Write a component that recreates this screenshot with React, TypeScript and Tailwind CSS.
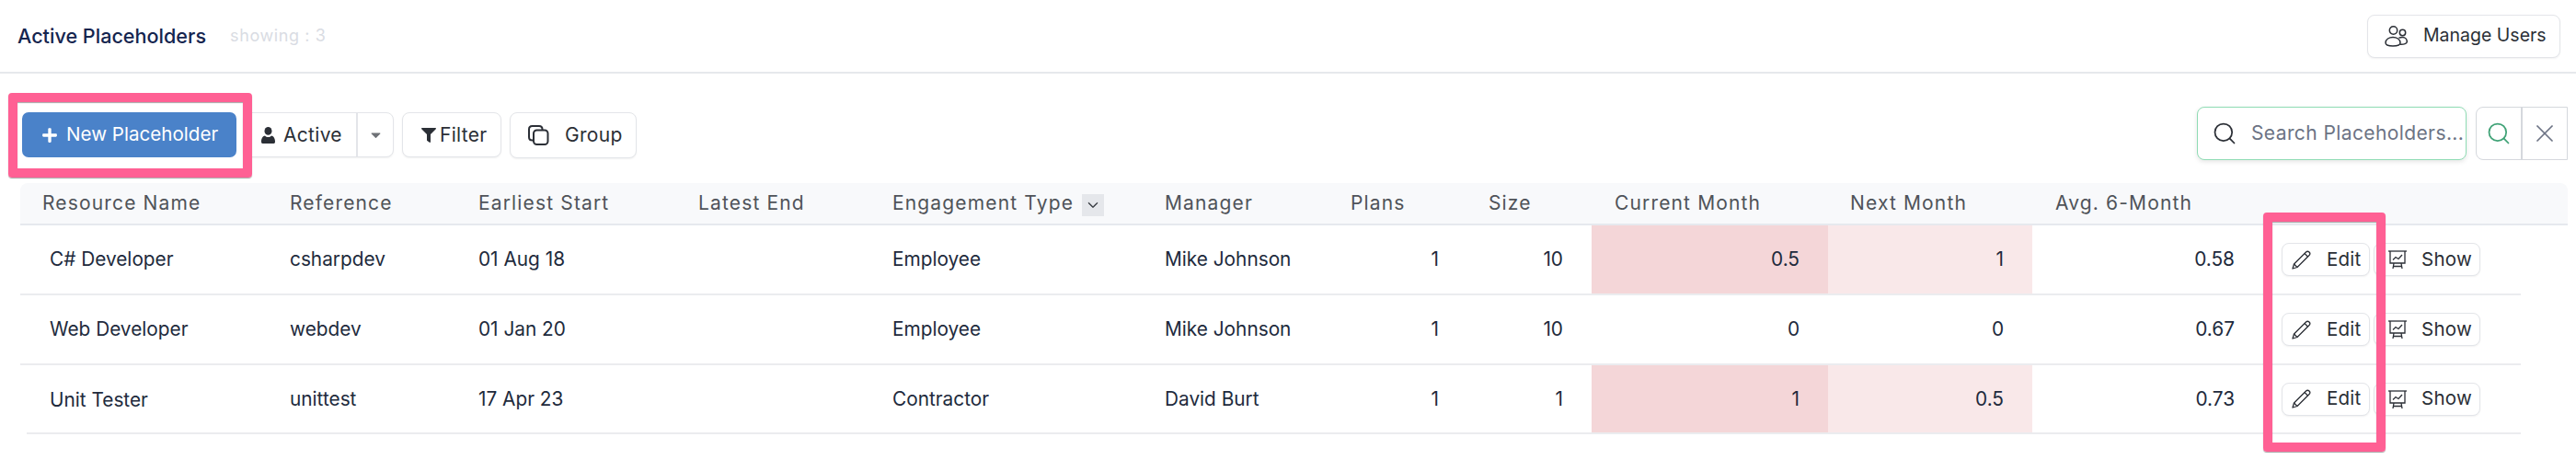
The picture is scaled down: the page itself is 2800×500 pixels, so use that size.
import React from "react";
import { FaPlus, FaFilter, FaCaretDown } from "react-icons/fa";
import { BsChevronDown } from "react-icons/bs";
import { Search, X } from "lucide-react";

type Row = { name: string; ref: string; start: string; type: string; mgr: string; plans: string; size: string; cur: string; next: string; avg: string; curBg: string; nextBg: string };

const rows: Row[] = [
  { name: "C# Developer", ref: "csharpdev", start: "01 Aug 18", type: "Employee", mgr: "Mike Johnson", plans: "1", size: "10", cur: "0.5", next: "1", avg: "0.58", curBg: "bg-[#f4d6d8]", nextBg: "bg-[#f9e8e9]" },
  { name: "Web Developer", ref: "webdev", start: "01 Jan 20", type: "Employee", mgr: "Mike Johnson", plans: "1", size: "10", cur: "0", next: "0", avg: "0.67", curBg: "", nextBg: "" },
  { name: "Unit Tester", ref: "unittest", start: "17 Apr 23", type: "Contractor", mgr: "David Burt", plans: "1", size: "1", cur: "1", next: "0.5", avg: "0.73", curBg: "bg-[#f4d6d8]", nextBg: "bg-[#f9e8e9]" },
];

const th = "h-[46px] pl-[32px] text-left font-normal text-[21px] tracking-[1.15px] text-[#4f5359] whitespace-nowrap border-b-2 border-[#e6e9ee]";
const td = "pl-[32px] text-[20.8px] text-[#212a3c] border-b-2 border-[#ebecef] whitespace-nowrap";
const tdr = "pr-[31px] text-right text-[20.8px] text-[#212a3c] border-b-2 border-[#ebecef] whitespace-nowrap";
const btn = "flex items-center bg-white border border-[#e3e5e9] rounded-[8px] text-[#2b2f36] shadow-[0_1px_2px_rgba(0,0,0,0.06)]";

function PeopleIcon() {
  return (
    <svg width="25" height="23" viewBox="0 0 25 23" fill="none" stroke="currentColor" strokeWidth="1.5">
      <circle cx="9.5" cy="5" r="4.2" />
      <circle cx="19.5" cy="7.5" r="3.2" />
      <path d="M1 18.5C1 14.5 5 12.5 9 12.5C13 12.5 17 14.5 17 18.5C17 21 13 22 9 22C5 22 1 21 1 18.5Z" />
      <path d="M15.5 13.2C16.8 12.6 18 12.4 19.5 12.4C22.5 12.4 24.3 14.8 24.3 17.2C24.3 19.4 21 20.4 17 20.2" />
    </svg>
  );
}

function UserIcon() {
  return (
    <svg width="15" height="18" viewBox="0 0 15 18" fill="currentColor">
      <ellipse cx="7.5" cy="4.4" rx="4" ry="4.4" />
      <path d="M1.5 18C0.4 18 0 17.2 0 15.8C0 12 2.2 9.6 4 9.4C5 10.4 6.1 10.9 7.5 10.9C8.9 10.9 10 10.4 11 9.4C12.8 9.6 15 12 15 15.8C15 17.2 14.6 18 13.5 18Z" />
    </svg>
  );
}

function GroupIcon() {
  return (
    <svg width="23" height="22" viewBox="0 0 23 22" fill="none" stroke="currentColor" strokeWidth="2">
      <rect x="6" y="5.5" width="15.5" height="15.5" rx="3.5" />
      <path d="M6 16.5H4.5C2.5 16.5 1 15 1 13V4.5C1 2.5 2.5 1 4.5 1H12C14 1 15.5 2.5 15.5 4.5V5.5" />
    </svg>
  );
}

function PencilIcon() {
  return (
    <svg width="21" height="21" viewBox="0 0 21 21" fill="none" stroke="currentColor" strokeWidth="1.3" strokeLinejoin="round">
      <path d="M1 20L2.5 15L15.5 2C16.5 1 18 1 19 2C20 3 20 4.5 19 5.5L6 18.5Z" />
      <path d="M14 3.5L17.5 7" />
      <path d="M2.5 15L6 18.5" />
    </svg>
  );
}

function ShowIcon() {
  return (
    <svg width="20" height="20" viewBox="0 0 20 20" fill="none" stroke="currentColor" strokeWidth="1.3">
      <path d="M0 1H20" />
      <path d="M2 1V14H18V1" />
      <path d="M5 10.5L8 7.5L11 9.5L15 5" />
      <path d="M6 14L5 20M14 14L15 20M5.5 17.5H14.5" />
    </svg>
  );
}

export default function App() {
  return (
    <div className="relative w-[2800px] h-[500px] overflow-hidden bg-white font-['Inter',sans-serif]">
      <header className="flex h-[80px] items-center justify-between border-b-2 border-[#e6e8ec] pl-[19px] pr-[17px]">
        <div className="flex items-center">
          <span className="text-[21.6px] font-medium text-[#15254f]">Active Placeholders</span>
          <span className="ml-[26px] text-[18px] tracking-[0.6px] text-[#d9dce3]">showing : 3</span>
        </div>
        <button className={`${btn} h-[47px] w-[210px] pl-[18px]`}>
          <PeopleIcon />
          <span className="ml-[17px] text-[19.5px]">Manage Users</span>
        </button>
      </header>

      <div className="flex h-[119px] justify-between pl-[24px] pr-[9px] pt-[36px]">
        <div className="mt-[6px] flex items-start">
          <button className="flex h-[49px] w-[233px] items-center rounded-[7px] bg-[#4a82c9] pl-[21px] text-white">
            <FaPlus className="text-[18px]" />
            <span className="ml-[9px] text-[20.6px]">New Placeholder</span>
          </button>
          <div className={`${btn} ml-[7px] h-[49px] w-[164px]`}>
            <span className="ml-[19px] flex">
              <UserIcon />
            </span>
            <span className="ml-[9px] text-[21px] tracking-[0.3px]">Active</span>
            <span className="ml-auto flex h-full w-[40px] items-center justify-center border-l-2 border-[#e3e5e9]">
              <FaCaretDown className="text-[17px] text-[#6f7277]" />
            </span>
          </div>
          <button className={`${btn} ml-[9px] h-[49px] w-[108px] pl-[20px]`}>
            <FaFilter className="text-[16px]" />
            <span className="ml-[4px] text-[21px] tracking-[0.3px]">Filter</span>
          </button>
          <button className={`${btn} ml-[9px] h-[50px] w-[138px] pl-[19px]`}>
            <GroupIcon />
            <span className="ml-[17px] text-[21px] tracking-[0.3px]">Group</span>
          </button>
        </div>
        <div className="flex items-start">
          <div className="flex h-[58px] w-[293px] items-center rounded-[8px] border border-[#8fdcb4] bg-white pl-[15px] shadow-[0_2px_5px_rgba(0,0,0,0.1)]">
            <Search size={28} strokeWidth={1.5} className="text-[#2b2f36]" />
            <span className="ml-[15px] text-[21px] tracking-[0.4px] text-[#6c7384]">Search Placeholders...</span>
          </div>
          <div className="ml-[10px] flex h-[58px] w-[100px] rounded-l-[8px] border border-[#d5d8dd]">
            <span className="flex w-[50px] items-center justify-center border-r-2 border-[#d5d8dd]">
              <Search size={28} strokeWidth={1.5} className="text-[#3fa276]" />
            </span>
            <span className="flex flex-1 items-center justify-center">
              <X size={32} strokeWidth={1.3} className="text-[#6c7384]" />
            </span>
          </div>
        </div>
      </div>

      <table className="ml-[22px] w-[2769px] table-fixed border-separate border-spacing-0">
        <colgroup>
          <col className="w-[261px]" />
          <col className="w-[205px]" />
          <col className="w-[239px]" />
          <col className="w-[211px]" />
          <col className="w-[296px]" />
          <col className="w-[202px]" />
          <col className="w-[159px]" />
          <col className="w-[135px]" />
          <col className="w-[257px]" />
          <col className="w-[222px]" />
          <col className="w-[251px]" />
          <col className="w-[280px]" />
          <col className="w-[51px]" />
        </colgroup>
        <thead>
          <tr className="bg-[#f8f9fb]">
            <th className={`${th} !pl-[24px] rounded-tl-[8px]`}>Resource Name</th>
            <th className={th}>Reference</th>
            <th className={th}>Earliest Start</th>
            <th className={th}>Latest End</th>
            <th className={th}>
              <span className="inline-flex items-center">
                Engagement Type
                <span className="ml-[9px] mt-[3px] flex h-[24px] w-[24px] items-center justify-center bg-[#e5e7eb] text-[#2b2f36]">
                  <BsChevronDown className="text-[12px] stroke-1" />
                </span>
              </span>
            </th>
            <th className={th}>Manager</th>
            <th className={th}>Plans</th>
            <th className={`${th} !pl-[23px]`}>Size</th>
            <th className={`${th} !pl-[25px]`}>Current Month</th>
            <th className={`${th} !pl-[24px]`}>Next Month</th>
            <th className={`${th} !pl-[25px]`}>Avg. 6-Month</th>
            <th className={th}></th>
            <th className={`${th} rounded-tr-[8px]`}></th>
          </tr>
        </thead>
        <tbody>
          {rows.map((r, i) => (
            <tr key={r.name} className={i === 2 ? "h-[75px]" : "h-[76px]"}>
              <td className={i === 2 ? "pl-[32px] text-[20.8px] text-[#212a3c] whitespace-nowrap bg-[linear-gradient(#ebecef,#ebecef)] bg-no-repeat bg-[length:calc(100%-7px)_2px] bg-[position:7px_100%]" : td}>{r.name}</td>
              <td className={td}>{r.ref}</td>
              <td className={td}>{r.start}</td>
              <td className={td}></td>
              <td className={td}>{r.type}</td>
              <td className={td}>{r.mgr}</td>
              <td className={tdr}>{r.plans}</td>
              <td className={tdr}>{r.size}</td>
              <td className={`${tdr} ${r.curBg}`}>{r.cur}</td>
              <td className={`${tdr} ${r.nextBg}`}>{r.next}</td>
              <td className={tdr}>{r.avg}</td>
              <td className="border-b-2 border-[#ebecef]">
                <div className="flex items-center pl-[20px]">
                  <button className={`${btn} h-[36px] w-[96px] pl-[10px]`}>
                    <PencilIcon />
                    <span className="ml-[17px] text-[20.5px] tracking-[0.2px]">Edit</span>
                  </button>
                  <button className={`${btn} ml-[4px] h-[36px] w-[116px] pl-[15px]`}>
                    <ShowIcon />
                    <span className="ml-[16px] text-[20.5px] tracking-[0.3px]">Show</span>
                  </button>
                </div>
              </td>
              <td></td>
            </tr>
          ))}
        </tbody>
      </table>

      <div className="absolute left-[9px] top-[101px] h-[92px] w-[265px] rounded-[4px] border-[10px] border-[#ff6094] shadow-[0_1px_1px_rgba(0,0,0,0.35),inset_0_1px_1px_rgba(0,0,0,0.35)]"></div>
      <div className="absolute left-[2460px] top-[231px] h-[260px] w-[133px] rounded-[4px] border-[10px] border-[#ff6094] shadow-[0_1px_1px_rgba(0,0,0,0.35),inset_0_1px_1px_rgba(0,0,0,0.35)]"></div>
    </div>
  );
}
